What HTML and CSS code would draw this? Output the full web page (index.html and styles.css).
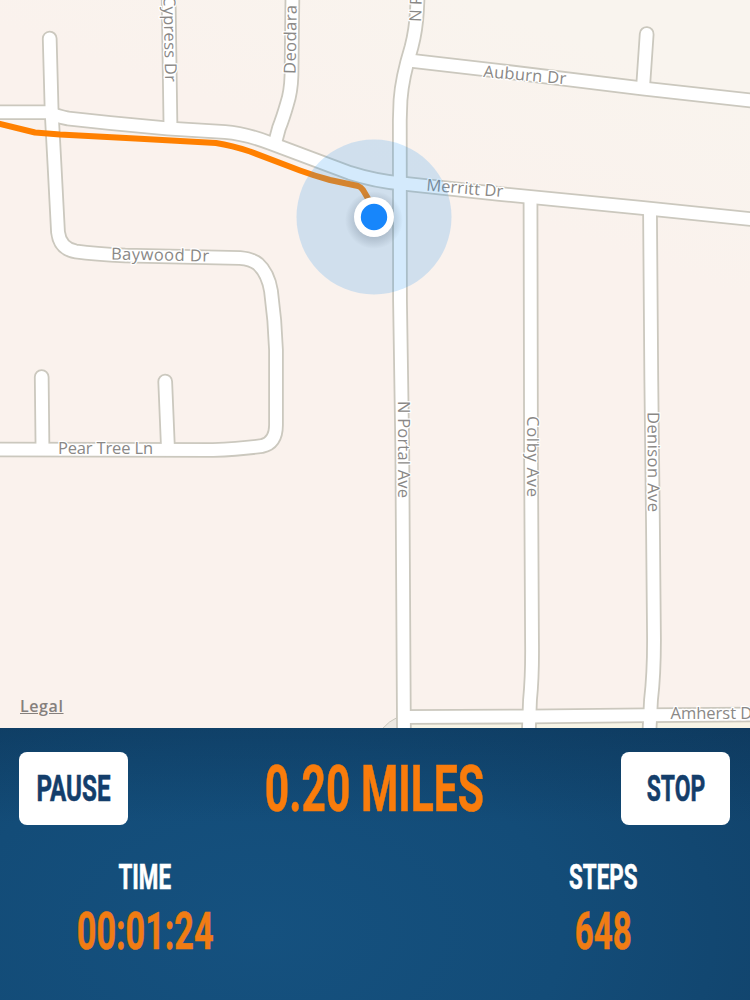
FILE: index.html
```html
<!DOCTYPE html>
<html lang="en">
<head>
    <meta charset="utf-8">
    <title>Run Tracker</title>
    <link rel="stylesheet" href="styles.css">
</head>
<body>
    <div class="map">
        <svg width="750" height="728" viewBox="0 0 750 728">
            <defs>
                <g id="roads">
                    <path d="M49.7 38.5 L51.7 113 L54.5 165 L58 232 Q60 249 76 251.5 Q95 254 125 255.5 L240 258 Q252 259 258 264 Q268 273 271 291 Q275 320 276 350 L276 425 Q276 443 262 446 Q240 449 213 450 L-10 449.5" />
                    <path d="M41.7 377 L42.5 449" />
                    <path d="M165.2 381.5 L168 449" />
                    <path d="M-10 112.3 L48 112.3 Q56 116 68 118.5 L110 123 L168 128.5 L225 132 Q245 133.5 270 143 L310 158 L350 173 Q375 181 402 183.5 L500 194 L643 208 L760 220" />
                    <path d="M168.5 -10 L170.5 128" />
                    <path d="M292.5 -10 L291.5 75 Q291 92 287 104 Q283 118 279 128 L275 143" />
                    <path d="M418 -10 L417 10 Q416 30 411.5 47 Q402 78 400.5 100 L399.8 120 L400 300 L402.3 450 L404 740" />
                    <path d="M409 60.5 L500 71 L643 88.5 L760 101.5" />
                    <path d="M646.7 34 L643 88" />
                    <path d="M530.5 198 L531 450 L532 640 Q532.5 675 530 700 L528.5 740" />
                    <path d="M650 210 L651.3 380 L653 530 L654 640 Q654 675 651 700 L649 740" />
                    <path d="M404 717 L530 716.5 L645 715.2 L760 714.5" />
                </g>
                <radialGradient id="shadow">
                    <stop offset="60%" stop-color="#4a5a6c" stop-opacity=".25" />
                    <stop offset="100%" stop-color="#4a5a6c" stop-opacity="0" />
                </radialGradient>
            </defs>

            <rect x="404" y="717" width="346" height="11" fill="#f7f4e6" />
            <path d="M382 729 Q389 721 398 717 L398 729 Z" fill="#ece8e2" stroke="#cbc8be" />

            <use href="#roads" class="road-edge" />
            <use href="#roads" class="road-fill" />

            <g class="labels">
                <text x="483" y="77" textLength="83" transform="rotate(5 483 77)">Auburn Dr</text>
                <text x="426" y="190.5" textLength="77" transform="rotate(5 426 190.5)">Merritt Dr</text>
                <text x="111" y="259.5" textLength="98" transform="rotate(1.2 111 259.5)">Baywood Dr</text>
                <text x="58" y="454" textLength="95">Pear Tree Ln</text>
                <text x="670.5" y="719">Amherst Dr</text>
                <text transform="translate(163.5 -4) rotate(89)" textLength="86">Cypress Dr</text>
                <text transform="translate(295.5 74) rotate(-89)" textLength="69">Deodara</text>
                <text transform="translate(421 22) rotate(-88)">N Portal Ave</text>
                <text transform="translate(397.5 401) rotate(90)" textLength="97">N Portal Ave</text>
                <text transform="translate(526.5 416) rotate(90)" textLength="81">Colby Ave</text>
                <text transform="translate(647.5 412) rotate(89.7)" textLength="100">Denison Ave</text>
            </g>

            <path class="route" d="M-5 122.5 L0 124 L35 132.5 L60 134.5 L140 138.7 L216 143 Q232 145.5 250 151.5 L300 170.5 Q315 176 330 180 L358 186 Q361 187 363 190 L373 207" />

            <circle class="accuracy" cx="374" cy="217" r="77.5" />
            <circle cx="374" cy="220" r="29" fill="url(#shadow)" />
            <circle cx="374" cy="217" r="20" fill="#fff" />
            <circle cx="374" cy="217" r="13.2" fill="#1786fb" />
        </svg>
        <a class="legal">Legal</a>
    </div>

    <div class="panel">
        <div class="controls">
            <button><span class="pause">PAUSE</span></button>
            <div class="distance"><span>0.20 MILES</span></div>
            <button><span class="stop">STOP</span></button>
        </div>
        <div class="stats">
            <div class="stat">
                <div class="name"><span>TIME</span></div>
                <div class="value"><span class="time">00:01:24</span></div>
            </div>
            <div class="stat">
                <div class="name"><span>STEPS</span></div>
                <div class="value"><span class="steps">648</span></div>
            </div>
        </div>
    </div>
</body>
</html>
```
FILE: styles.css
```css
body {
    margin: 0;
    width: 750px;
    height: 1000px;
    overflow: hidden;
    font-family: Roboto, sans-serif;
}

.map {
    position: relative;
    height: 728px;
    background: linear-gradient(20deg, #faf2ed 70%, #f9f4ee 90%);
}

.map svg {
    display: block;
}

.road-edge,
.road-fill {
    fill: none;
    stroke-linecap: round;
    stroke-linejoin: round;
}

.road-edge {
    stroke: #cbc8be;
    stroke-width: 15.6px;
}

.road-fill {
    stroke: #fff;
    stroke-width: 12px;
}

.labels {
    font-family: "Open Sans", sans-serif;
    font-size: 16.5px;
    font-weight: 500;
    fill: #8a8886;
    stroke: #fff;
    stroke-width: 2.5px;
    stroke-linejoin: round;
    paint-order: stroke;
}

.route {
    fill: none;
    stroke: #ff8000;
    stroke-width: 6px;
    stroke-linejoin: round;
}

.accuracy {
    fill: #2898ee;
    fill-opacity: 0.2;
}

.legal {
    position: absolute;
    left: 20px;
    bottom: 11px;
    font: 600 16px/22px "Open Sans", sans-serif;
    letter-spacing: 0.6px;
    color: #85807d;
    text-decoration: underline;
}

.panel {
    height: 272px;
    box-sizing: border-box;
    padding: 24px 20px 0 19px;
    background:
        linear-gradient(rgba(8, 40, 70, 0.3), rgba(8, 40, 70, 0) 35%),
        radial-gradient(ellipse 600px 380px at 35% 75%, #15517f, #134c78 50%, #11426a);
}

.controls {
    display: flex;
    justify-content: space-between;
    height: 73px;
}

.panel span {
    display: inline-block;
    white-space: nowrap;
    -webkit-text-stroke: 0.6px currentColor;
}

button {
    width: 109px;
    height: 73px;
    padding: 0;
    border: none;
    border-radius: 8px;
    background: #fff;
    color: #143e6b;
    font: 700 37.5px/73px Roboto, sans-serif;
    display: flex;
    justify-content: center;
}

.distance {
    width: 220px;
    display: flex;
    justify-content: center;
    color: #f97c0c;
    font-size: 65px;
    font-weight: 700;
    line-height: 75px;
}

.distance span {
    transform: scaleX(0.655);
}

.pause {
    transform: scaleX(0.645);
}

.stop {
    transform: scaleX(0.61);
}

.stats {
    display: flex;
    justify-content: space-between;
    padding: 30px 17px 0 16px;
}

.stat {
    width: 220px;
    display: flex;
    flex-direction: column;
    align-items: center;
    font-weight: 700;
}

.name {
    color: #fff;
    font-size: 35.5px;
    line-height: 44px;
}

.name span {
    transform: scaleX(0.63);
}

.value {
    color: #f07c14;
    font-size: 52.5px;
    line-height: 64px;
}

.time {
    transform: scaleX(0.65);
}

.steps {
    transform: scaleX(0.63);
}
```
